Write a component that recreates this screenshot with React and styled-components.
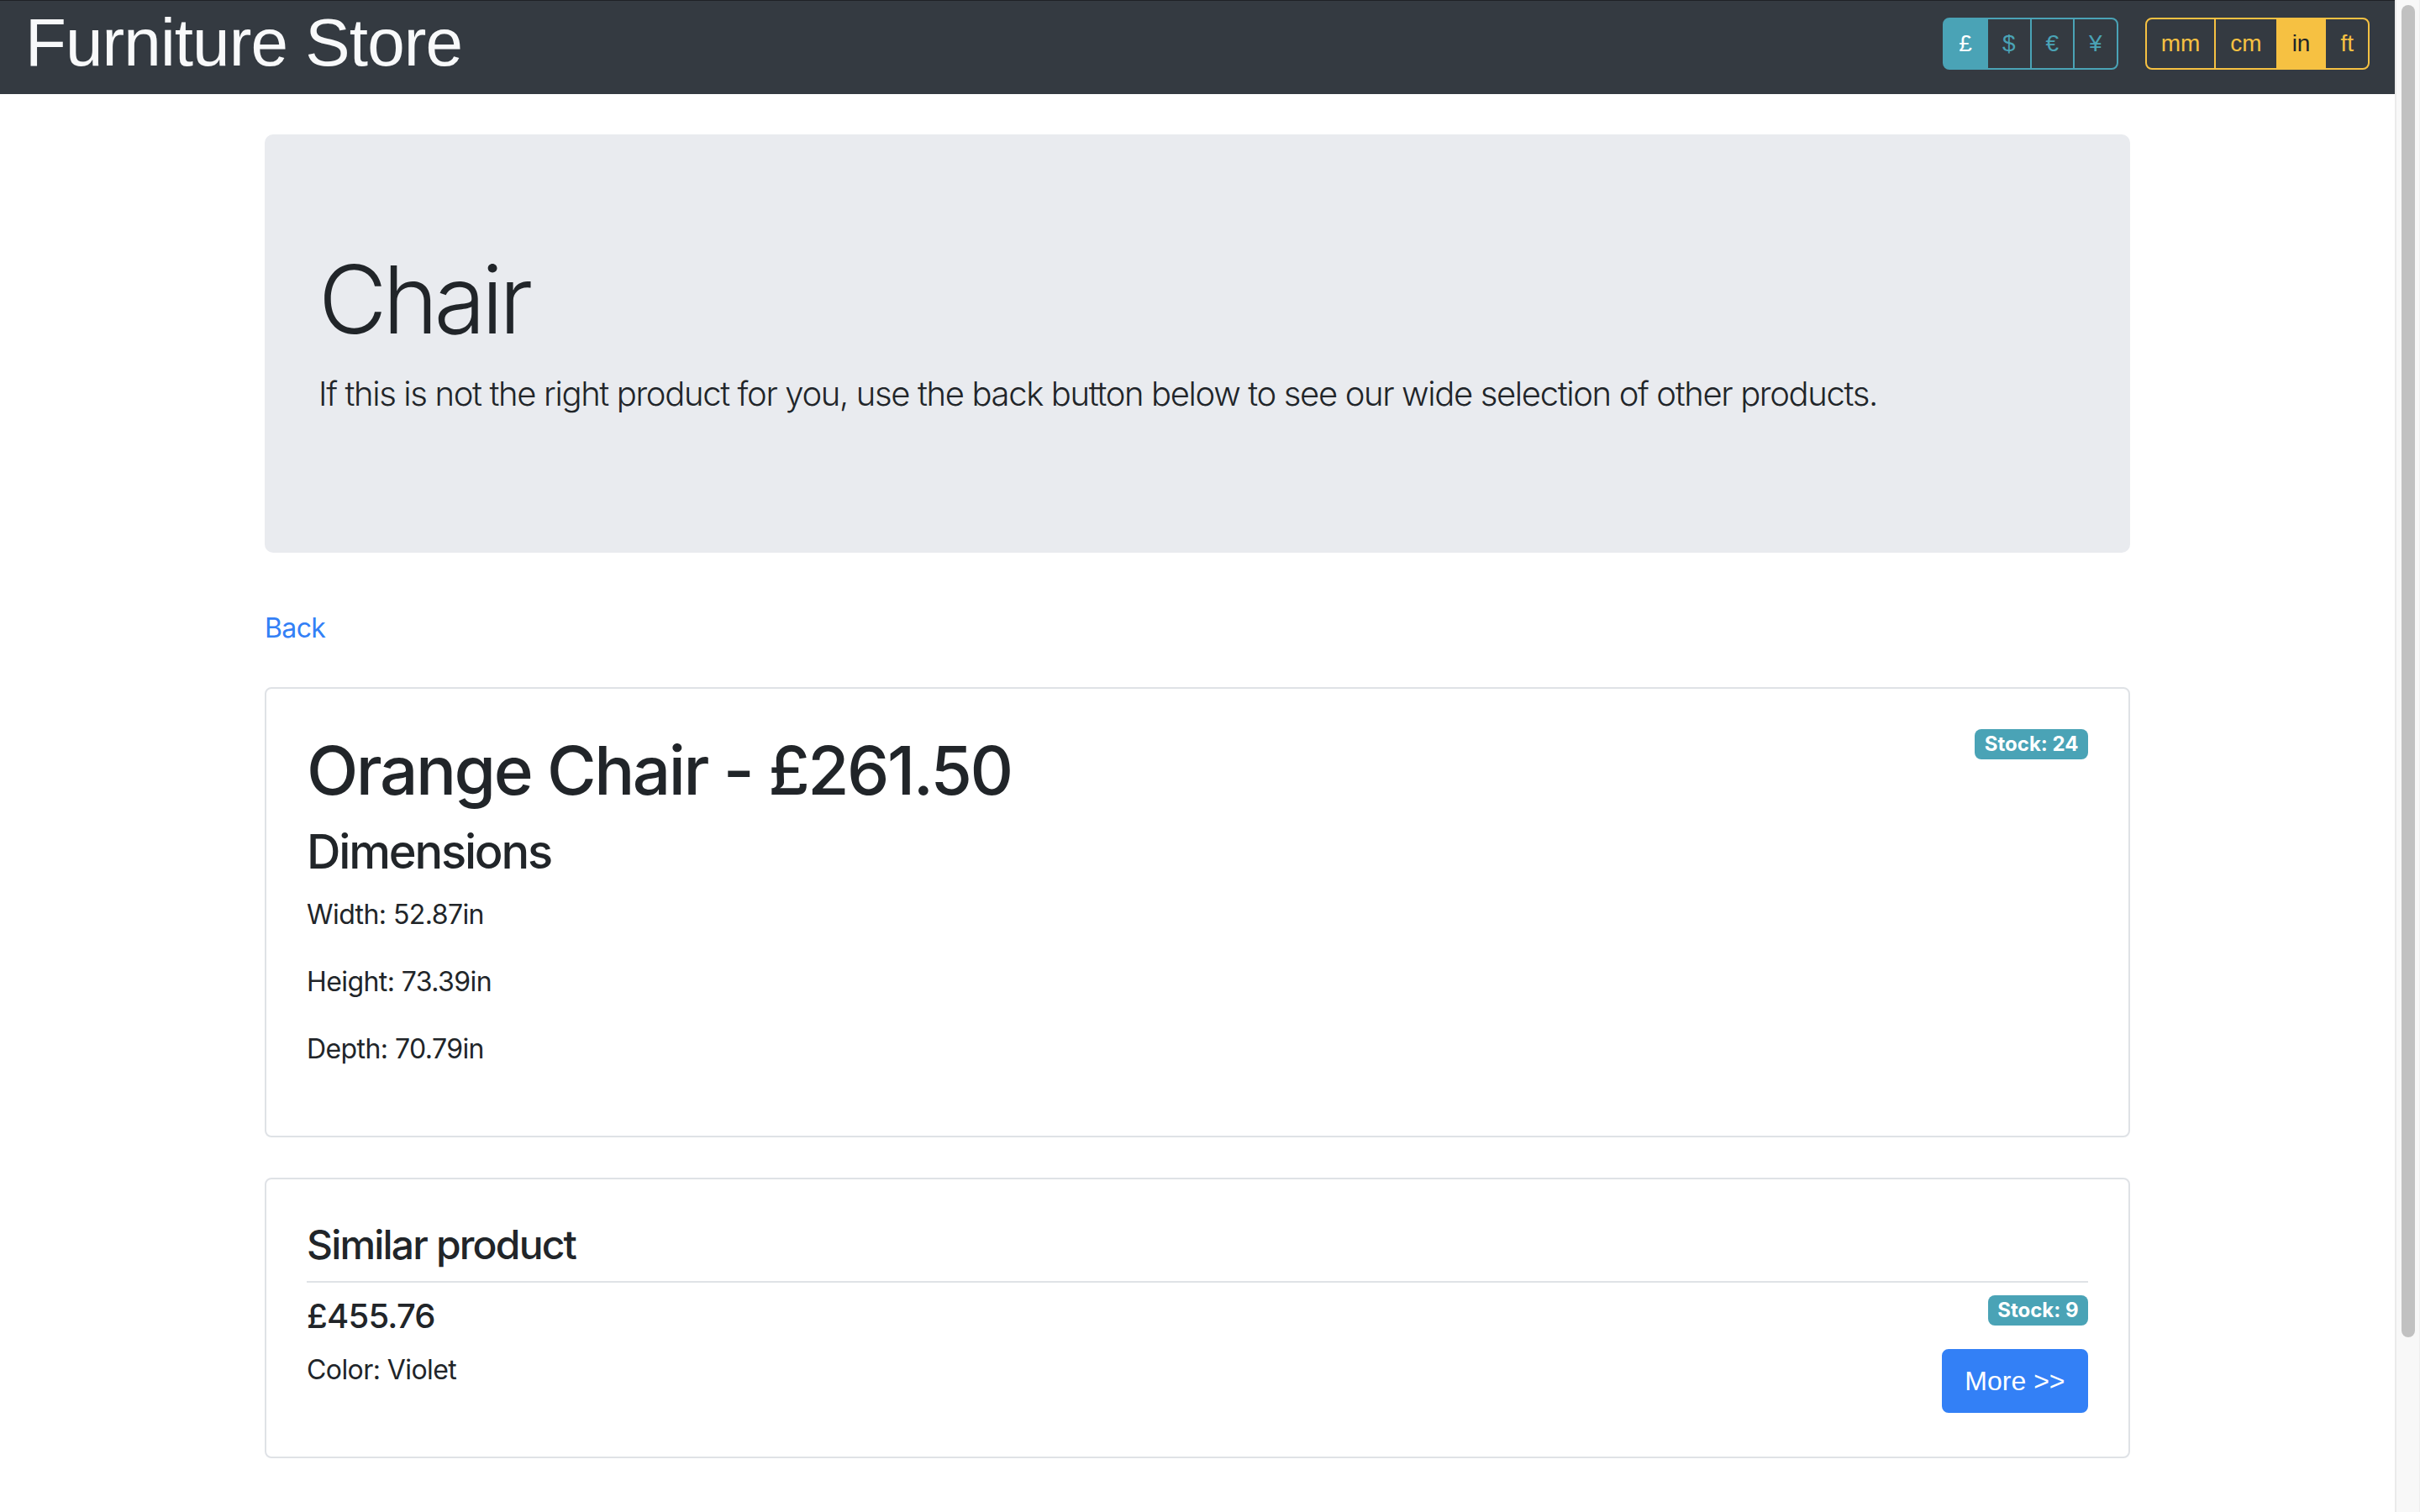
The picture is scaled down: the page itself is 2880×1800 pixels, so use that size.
import React from "react";
import styled, { createGlobalStyle } from "styled-components";

const GlobalStyle = createGlobalStyle`
  html, body { margin: 0; padding: 0; height: 100%; overflow: hidden; }
  body {
    font-family: Inter, "Noto Sans", "Liberation Sans", sans-serif;
    color: #212529;
    background: #fff;
  }
  * { box-sizing: border-box; }
`;

const C = {
  dark: "#343a41",
  info: "#4aa3b6",
  warning: "#f6c142",
  primary: "#3380f6",
  text: "#212529",
  jumbo: "#e9ebef",
  border: "#dfe2e6",
};

const Page = styled.div`
  display: flex;
  width: 100%;
  height: 100vh;
`;

const Main = styled.div`
  flex: 1;
  min-width: 0;
  display: flex;
  flex-direction: column;
`;

const Navbar = styled.nav`
  height: 112px;
  background: ${C.dark};
  border-top: 1px solid #1f2226;
  display: flex;
  align-items: flex-start;
  justify-content: space-between;
  padding: 0 30px 0 30px;
`;

const Brand = styled.h1`
  margin: 10px 0 0 0;
  font-family: "Liberation Sans", Arial, sans-serif;
  font-weight: 400;
  font-size: 80px;
  line-height: 80px;
  letter-spacing: -0.9px;
  color: #f8f9fa;
`;

const Controls = styled.div`
  display: flex;
  gap: 32px;
  margin-top: 20px;
`;

const Group = styled.div`
  display: inline-flex;
`;

const GroupButton = styled.button`
  font-family: "Liberation Sans", Arial, sans-serif;
  font-size: 28px;
  line-height: 42px;
  padding: 8px 17px;
  margin: 0;
  border: 2px solid ${(p) => p.$color};
  background: ${(p) => (p.$active ? p.$color : "transparent")};
  color: ${(p) => (p.$active ? p.$activeText : p.$color)};
  border-radius: 0;
  cursor: pointer;
  & + & { margin-left: -2px; }
  &:first-child { border-radius: 8px 0 0 8px; }
  &:last-child { border-radius: 0 8px 8px 0; }
`;

const Container = styled.div`
  width: 2220px;
  margin: 48px auto 0;
`;

const Jumbotron = styled.div`
  background: ${C.jumbo};
  border-radius: 10px;
  padding: 129px 64px 127px;
  margin-bottom: 64px;
`;

const DisplayTitle = styled.h1`
  margin: 0 0 16px;
  font-size: 112px;
  font-weight: 300;
  line-height: 1.2;
  letter-spacing: -0.045em;
`;

const Lead = styled.p`
  margin: 0 0 32px;
  font-size: 40px;
  font-weight: 300;
  line-height: 1.5;
  letter-spacing: -0.034em;
`;

const BackLink = styled.a`
  display: block;
  width: fit-content;
  font-size: 32px;
  line-height: 48px;
  padding-top: 2px;
  letter-spacing: -0.02em;
  color: ${C.primary};
  text-decoration: none;
  margin-bottom: 46px;
`;

const Card = styled.div`
  border: 2px solid ${C.border};
  border-radius: 8px;
  padding: 49px 48px 47px;
  & + & { margin-top: 48px; }
`;

const Row = styled.div`
  display: flex;
  justify-content: space-between;
  align-items: flex-start;
`;

const Heading = styled.div`
  margin: 0 0 16px;
  font-weight: 500;
  line-height: 1.2;
  font-size: ${(p) => p.$size}px;
  letter-spacing: ${(p) => p.$track}em;
`;

const SectionHeading = styled.h4`
  margin: 0 0 16px;
  font-size: 48px;
  font-weight: 500;
  line-height: 1.2;
  letter-spacing: -0.038em;
  padding-bottom: 15px;
  border-bottom: 2px solid ${C.border};
`;

const Text = styled.p`
  margin: 0 0 32px;
  font-size: 32px;
  line-height: 48px;
  letter-spacing: -0.018em;
`;

const Badge = styled.span`
  display: inline-block;
  margin-top: -1px;
  background: ${C.info};
  color: #fff;
  font-size: 24px;
  font-weight: 700;
  line-height: 1;
  padding: 6px 11.5px;
  border-radius: 8px;
  white-space: nowrap;
`;

const SideColumn = styled.div`
  display: flex;
  flex-direction: column;
  align-items: flex-end;
  gap: 28px;
`;

const PrimaryButton = styled.button`
  font-family: "Liberation Sans", Arial, sans-serif;
  font-size: 32px;
  line-height: 48px;
  padding: 12px 25.5px;
  border: 2px solid ${C.primary};
  background: ${C.primary};
  color: #fff;
  border-radius: 8px;
  cursor: pointer;
`;

const ScrollTrack = styled.div`
  width: 30px;
  flex: none;
  background: #f8f8f8;
  border-left: 2px solid #ebebeb;
  border-right: 1px solid #efefef;
  padding: 6px 5px 0 6px;
`;

const ScrollThumb = styled.div`
  width: 16px;
  height: 1586px;
  border-radius: 8px;
  background: #c1c1c1;
`;

const currencies = ["£", "$", "€", "¥"];
const units = ["mm", "cm", "in", "ft"];

export default function App() {
  return (
    <>
      <GlobalStyle />
      <Page>
        <Main>
          <Navbar>
            <Brand>Furniture Store</Brand>
            <Controls>
              <Group>
                {currencies.map((c, i) => (
                  <GroupButton key={c} $color={C.info} $activeText="#fff" $active={i === 0}>
                    {c}
                  </GroupButton>
                ))}
              </Group>
              <Group>
                {units.map((u) => (
                  <GroupButton key={u} $color={C.warning} $activeText={C.text} $active={u === "in"}>
                    {u}
                  </GroupButton>
                ))}
              </Group>
            </Controls>
          </Navbar>
          <Container>
            <Jumbotron>
              <DisplayTitle>Chair</DisplayTitle>
              <Lead>
                If this is not the right product for you, use the back button below to see our wide
                selection of other products.
              </Lead>
            </Jumbotron>
            <BackLink href="#">Back</BackLink>
            <Card>
              <Row>
                <div>
                  <Heading as="h1" $size={80} $track={-0.031}>Orange Chair - £261.50</Heading>
                  <Heading as="h3" $size={56} $track={-0.039}>Dimensions</Heading>
                  <Text>Width: 52.87in</Text>
                  <Text>Height: 73.39in</Text>
                  <Text>Depth: 70.79in</Text>
                </div>
                <Badge>Stock: 24</Badge>
              </Row>
            </Card>
            <Card>
              <SectionHeading>Similar product</SectionHeading>
              <Row>
                <div>
                  <Heading as="h5" $size={40} $track={-0.02}>£455.76</Heading>
                  <Text>Color: Violet</Text>
                </div>
                <SideColumn>
                  <Badge>Stock: 9</Badge>
                  <PrimaryButton>More &gt;&gt;</PrimaryButton>
                </SideColumn>
              </Row>
            </Card>
          </Container>
        </Main>
        <ScrollTrack>
          <ScrollThumb />
        </ScrollTrack>
      </Page>
    </>
  );
}
